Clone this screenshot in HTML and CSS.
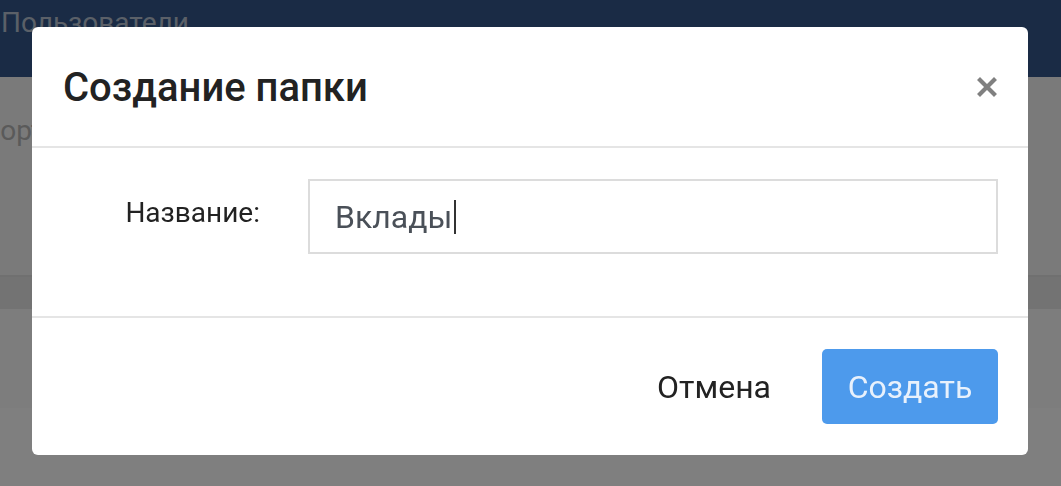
FILE: index.html
```html
<!DOCTYPE html>
<html lang="ru">
  <head>
    <meta charset="UTF-8" />
    <meta name="viewport" content="width=device-width, initial-scale=1.0" />
    <title>Создание папки</title>
    <link rel="stylesheet" href="styles.css">
  </head>
  <body>
    <div class="page">
      <header class="topbar">
        <span class="topbar-title">Пользователи</span>
      </header>
      <main class="content">
        <div class="content-head">
          <span class="content-title">Сортировка</span>
        </div>
        <div class="table-head"></div>
        <div class="table-body"></div>
      </main>
    </div>

    <div class="backdrop"></div>

    <div class="modal">
      <div class="modal-header">
        <h2>Создание папки</h2>
        <button class="close" type="button" aria-label="Закрыть">
          <svg width="20" height="20" viewBox="0 0 20 20">
            <path d="M3 3 L17 17 M17 3 L3 17" stroke="#808080" stroke-width="4.2" stroke-linecap="square" />
          </svg>
        </button>
      </div>
      <div class="modal-body">
        <div class="form-row">
          <label for="folder-name">Название:</label>
          <div class="input-box">
            <span class="input-value">Вклады</span><span class="caret"></span>
          </div>
        </div>
      </div>
      <div class="modal-footer">
        <button class="btn btn-link" type="button">Отмена</button>
        <button class="btn btn-primary" type="button">Создать</button>
      </div>
    </div>
  </body>
</html>
```

FILE: styles.css
```css
* {
  margin: 0;
  padding: 0;
  box-sizing: border-box;
}

body {
  font-family: Roboto, "Noto Sans", sans-serif;
  background-color: #fff;
  color: #222;
  width: 1061px;
  height: 486px;
  overflow: hidden;
}

.page {
  display: flex;
  flex-direction: column;
  height: 486px;
}

.topbar {
  background-color: #34578a;
  height: 77px;
  display: flex;
  align-items: flex-start;
  box-shadow: 0 2px 6px rgba(0, 0, 0, 0.25);
}

.topbar-title {
  color: #b6c1d0;
  font-size: 28px;
  line-height: 40px;
  margin-top: 3px;
  margin-left: 1px;
}

.content {
  flex-grow: 1;
  display: flex;
  flex-direction: column;
}

.content-head {
  background-color: #f4f4f4;
  height: 200px;
  border-bottom: 2px solid #e0e0e0;
}

.content-title {
  display: block;
  color: #b4b4b4;
  font-size: 28px;
  line-height: 40px;
  margin-top: 34px;
  margin-left: -18px;
}

.table-head {
  background-color: #e6e6e6;
  height: 32px;
}

.table-body {
  background-color: #fafafa;
  height: 99px;
}

.backdrop {
  position: fixed;
  inset: 0;
  background-color: rgba(0, 0, 0, 0.5);
}

.modal {
  position: fixed;
  left: 32px;
  top: 27px;
  width: 996px;
  height: 428px;
  background-color: #fff;
  border-radius: 6px;
  display: flex;
  flex-direction: column;
}

.modal-header {
  height: 121px;
  padding: 0 31px;
  display: flex;
  align-items: center;
  justify-content: space-between;
  border-bottom: 2px solid #e5e5e5;
}

.modal-header h2 {
  font-size: 40px;
  font-weight: 500;
  color: #222;
  padding-top: 2px;
}

.close {
  background: none;
  border: none;
  width: 20px;
  height: 20px;
  display: flex;
  cursor: pointer;
}

.modal-body {
  height: 170px;
  padding: 31px 30px 0 30px;
  border-bottom: 2px solid #e5e5e5;
}

.form-row {
  display: grid;
  grid-template-columns: 198px 1fr;
  gap: 48px;
  align-items: center;
}

.form-row label {
  text-align: right;
  font-size: 28px;
  color: #222;
  padding-bottom: 8px;
}

.input-box {
  height: 75px;
  border: 2px solid #dcdcdc;
  padding: 0 25px;
  display: flex;
  align-items: center;
}

.input-value {
  font-size: 32px;
  color: #4a5058;
}

.caret {
  width: 2px;
  height: 34px;
  background-color: #333;
  margin-left: 2px;
}

.modal-footer {
  flex-grow: 1;
  padding: 0 30px;
  display: flex;
  align-items: center;
  justify-content: flex-end;
  gap: 26px;
}

.btn {
  font-family: Roboto, "Noto Sans", sans-serif;
  font-size: 32px;
  height: 75px;
  border: none;
  border-radius: 5px;
  cursor: pointer;
}

.btn-link {
  background: none;
  color: #222;
  padding: 0 25px;
}

.btn-primary {
  background-color: #4d9aec;
  color: #e8f1fc;
  width: 176px;
}
```
